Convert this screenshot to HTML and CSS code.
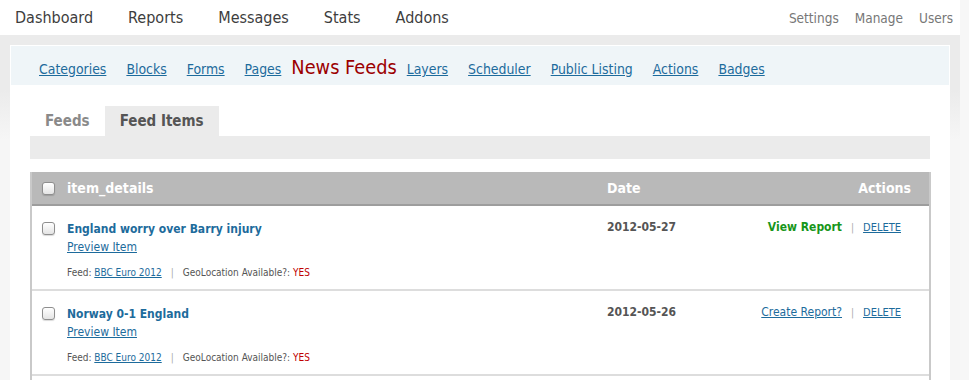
FILE: index.html
```html
<!DOCTYPE html>
<html lang="en">

<head>
    <meta charset="UTF-8">
    <title>News Feeds - Feed Items</title>
    <link rel="stylesheet" href="styles.css">
</head>

<body>
    <!-- Main navigation -->
    <div class="topbar">
        <ul class="mainnav">
            <li><a href="#">Dashboard</a></li>
            <li><a href="#">Reports</a></li>
            <li><a href="#">Messages</a></li>
            <li><a href="#">Stats</a></li>
            <li><a href="#">Addons</a></li>
        </ul>
        <ul class="adminnav">
            <li><a href="#">Settings</a></li>
            <li><a href="#">Manage</a></li>
            <li><a href="#">Users</a></li>
        </ul>
    </div>

    <div class="panel">
        <!-- Section navigation -->
        <div class="subnav">
            <a href="#">Categories</a>
            <a href="#">Blocks</a>
            <a href="#">Forms</a>
            <a href="#">Pages</a>
            <span class="current">News Feeds</span>
            <a href="#">Layers</a>
            <a href="#">Scheduler</a>
            <a href="#">Public Listing</a>
            <a href="#">Actions</a>
            <a href="#">Badges</a>
        </div>

        <div class="content">
            <div class="tabs">
                <a href="#" class="tab">Feeds</a>
                <a href="#" class="tab active">Feed Items</a>
            </div>
            <div class="toolbar"></div>

            <!-- Feed items list -->
            <div class="items">
                <div class="row head">
                    <div><span class="check"></span></div>
                    <div>item_details</div>
                    <div>Date</div>
                    <div class="actions">Actions</div>
                </div>

                <div class="row">
                    <div><span class="check"></span></div>
                    <div>
                        <a href="#" class="title">England worry over Barry injury</a>
                        <a href="#" class="preview">Preview Item</a>
                        <p class="meta">Feed: <a href="#">BBC Euro 2012</a><span class="sep">|</span>GeoLocation Available?: <span class="yes">YES</span></p>
                    </div>
                    <div class="date">2012-05-27</div>
                    <div class="actions links">
                        <a href="#" class="view">View Report</a><span class="sep">|</span><a href="#" class="delete">DELETE</a>
                    </div>
                </div>

                <div class="row">
                    <div><span class="check"></span></div>
                    <div>
                        <a href="#" class="title">Norway 0-1 England</a>
                        <a href="#" class="preview">Preview Item</a>
                        <p class="meta">Feed: <a href="#">BBC Euro 2012</a><span class="sep">|</span>GeoLocation Available?: <span class="yes">YES</span></p>
                    </div>
                    <div class="date">2012-05-26</div>
                    <div class="actions links">
                        <a href="#" class="create">Create Report?</a><span class="sep">|</span><a href="#" class="delete">DELETE</a>
                    </div>
                </div>
            </div>
        </div>
    </div>
</body>

</html>
```

FILE: styles.css
```css
html {
    background-color: #f7f7f7;
}

body {
    font-family: "DejaVu Sans Condensed", "DejaVu Sans", sans-serif;
    margin: 0;
    width: 960px;
    background: linear-gradient(#ebebeb 0, #ebebeb 90px, #f6f6f6 140px);
    color: #444;
}

a {
    color: #1d6b9c;
}

/* Top bar */
.topbar {
    display: flex;
    justify-content: space-between;
    align-items: center;
    height: 35px;
    width: 969px;
    background-color: #fff;
}

.topbar ul {
    display: flex;
    list-style: none;
    margin: 0;
    padding: 0;
}

.topbar a {
    text-decoration: none;
}

.mainnav {
    gap: 35px;
    padding-left: 15px !important;
}

.mainnav a {
    font-size: 16px;
    color: #3d3d3d;
}

.adminnav {
    gap: 16px;
    padding-right: 16px !important;
}

.adminnav a {
    font-size: 13.5px;
    color: #777;
}

/* Panel */
.panel {
    margin: 10px 0 0 10px;
    width: 940px;
    height: 340px;
    background-color: #fff;
}

.subnav {
    display: flex;
    align-items: baseline;
    gap: 20px;
    margin: 0 1px;
    position: relative;
    top: 1px;
    height: 39px;
    box-sizing: border-box;
    padding: 10px 0 0 28px;
    background-color: #eff5f8;
}

.subnav a {
    font-size: 13.9px;
}

.subnav .current {
    margin: 0 -10px;
    font-size: 19.8px;
    color: #9c0000;
}

.content {
    padding: 22px 20px 0;
}

.tabs {
    display: flex;
    height: 30px;
}

.tab {
    padding: 0 15px;
    line-height: 31px;
    font-size: 15px;
    font-weight: bold;
    color: #8a8a8a;
    text-decoration: none;
}

.tab.active {
    background-color: #ebebeb;
    color: #555;
}

.toolbar {
    height: 23px;
    background-color: #ebebeb;
}

/* Items list */
.items {
    margin-top: 13px;
    width: 901px;
    height: 220px;
    box-sizing: border-box;
    border-left: 2px solid #c9c9c9;
    border-right: 2px solid #c9c9c9;
}

.row {
    display: grid;
    grid-template-columns: 35px 540px 100px 1fr;
    padding: 16px 28px 0 0;
    height: 85px;
    box-sizing: border-box;
    border-bottom: 2px solid #ddd;
    font-size: 12px;
}

.row > div:first-child {
    padding-left: 10px;
}

.row.head {
    height: 34px;
    padding: 0 18px 0 0;
    align-items: center;
    background-color: #b9b9b9;
    border-bottom: 2px solid #9d9d9d;
    color: #fff;
    font-size: 14px;
    font-weight: bold;
}

.row.head > div:first-child {
    display: flex;
}

.check {
    display: inline-block;
    width: 13px;
    height: 13px;
    box-sizing: border-box;
    border: 1px solid #8e8e8e;
    border-radius: 3px;
    background: linear-gradient(#fff, #e4e4e4);
    box-shadow: 0 1px 1px rgba(0, 0, 0, 0.15);
}

.title {
    display: block;
    font-weight: bold;
    text-decoration: none;
    line-height: 15px;
}

.preview {
    display: inline-block;
    margin-top: 3px;
    line-height: 15px;
}

.meta {
    margin: 12px 0 0;
    font-size: 10px;
    color: #555;
}

.sep {
    margin: 0 9px;
    color: #aaa;
    font-size: 10px;
}

.yes {
    color: #c00000;
}

.date {
    margin-top: -2px;
    font-weight: bold;
    color: #555;
    line-height: 15px;
}

.actions {
    text-align: right;
    line-height: 15px;
}

.actions.links {
    margin-top: -2px;
}

.view {
    font-weight: bold;
    color: #17961a;
    text-decoration: none;
}

.delete {
    font-size: 11px;
}
```
